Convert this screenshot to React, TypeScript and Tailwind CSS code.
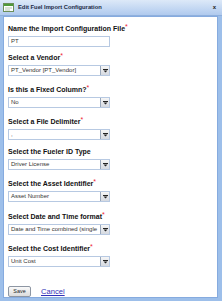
import React from 'react';

const Req = () => <span className="text-[#e23] text-[7px] relative -top-[2px] font-normal">*</span>;

type FieldProps = { label: string; required?: boolean; value: string; select?: boolean; mt: string };

const Field = ({ label, required, value, select = true, mt }: FieldProps) => (
  <div className={mt}>
    <div className="text-[7px] font-bold text-[#111] leading-[9px] whitespace-nowrap">
      {label}
      {required && <Req />}
    </div>
    <div className="mt-[3px] flex w-[102px] h-[11px] border border-[#b7c9e2] bg-white">
      <div className="flex-1 pl-[2px] text-[6px] leading-[9px] text-[#333] overflow-hidden whitespace-nowrap">{value}</div>
      {select && (
        <div className="w-[9px] h-[9px] border-l border-[#9aa8bb] bg-gradient-to-b from-[#f6f6f6] to-[#d5d9e0] flex items-center justify-center">
          <svg width="5" height="4" viewBox="0 0 5 4">
            <rect x="0" y="0" width="5" height="1" fill="#222" />
            <polygon points="0.5,1.5 4.5,1.5 2.5,3.5" fill="#222" />
          </svg>
        </div>
      )}
    </div>
  </div>
);

export default function App() {
  return (
    <div className="w-[222px] h-[301px] bg-[#9dbfea] pl-[3px] pr-[4px] pb-[3px] flex flex-col" style={{ fontFamily: '"Liberation Sans", Arial, sans-serif' }}>
      <div className="h-[16px] flex items-center bg-gradient-to-b from-[#dde9f8] to-[#b0caee] -ml-[3px] -mr-[4px] pl-[3px] pr-[6px] border-b border-[#8fb0dd]">
        <svg width="11" height="9" viewBox="0 0 11 9">
          <rect x="0.5" y="0.5" width="10" height="8" fill="#fff" stroke="#6c8f5a" />
          <rect x="1" y="1" width="9" height="2" fill="#4f9a3a" />
          <rect x="2" y="4.5" width="7" height="1" fill="#b8c7b0" />
          <rect x="2" y="6.5" width="5" height="1" fill="#b8c7b0" />
        </svg>
        <span className="ml-[4px] text-[5.8px] font-bold text-[#1b2a44]">Edit Fuel Import Configuration</span>
        <span className="ml-auto text-[6px] font-bold text-[#222]">x</span>
      </div>
      <div className="flex-1 bg-white border border-[#86abdf] px-[4px] pt-[7px]">
        <Field label="Name the Import Configuration File" required value="PT" select={false} mt="mt-0" />
        <Field label="Select a Vendor" required value="PT_Vendor [PT_Vendor]" mt="mt-[6px]" />
        <Field label="Is this a Fixed Column?" required value="No" mt="mt-[9px]" />
        <Field label="Select a File Delimiter" required value="," mt="mt-[9px]" />
        <Field label="Select the Fueler ID Type" value="Driver License" mt="mt-[7px]" />
        <Field label="Select the Asset Identifier" required value="Asset Number" mt="mt-[9px]" />
        <Field label="Select Date and Time format" required value="Date and Time combined (single" mt="mt-[10px]" />
        <Field label="Select the Cost Identifier" required value="Unit Cost" mt="mt-[9px]" />
        <div className="mt-[19px] flex items-center">
          <button className="w-[23px] h-[11px] rounded-[2px] border border-[#8d96a3] bg-gradient-to-b from-[#fafafa] to-[#dcdcdc] text-[5.4px] text-[#222] leading-[9px]">Save</button>
          <a className="ml-[10px] text-[7.6px] text-[#3030b8] underline leading-[9px]">Cancel</a>
        </div>
      </div>
    </div>
  );
}
